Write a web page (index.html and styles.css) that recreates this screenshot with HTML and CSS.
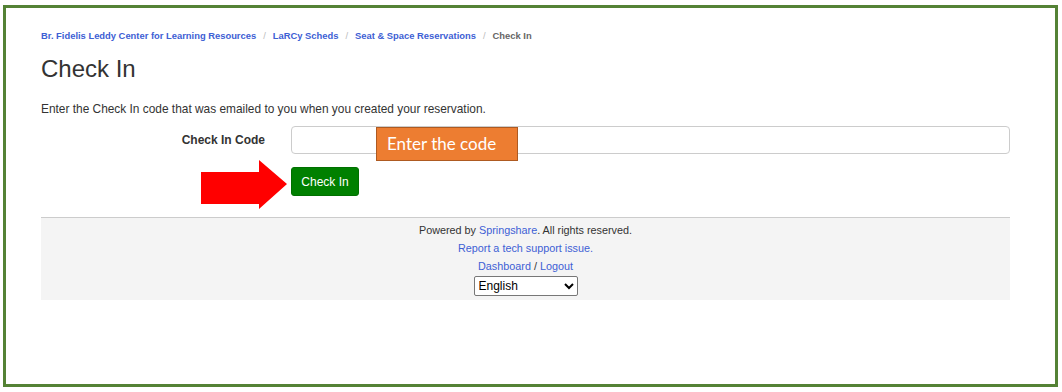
FILE: index.html
```html
<!DOCTYPE html>
<html lang="en">
<head>
  <meta charset="UTF-8" />
  <title>Check In - LaRCy Scheds</title>
  <link rel="stylesheet" href="styles.css">
</head>
<body>
  <div class="frame">
    <div class="container">
      <ol class="breadcrumb">
        <li><a href="#">Br. Fidelis Leddy Center for Learning Resources</a></li>
        <li><a href="#">LaRCy Scheds</a></li>
        <li><a href="#">Seat &amp; Space Reservations</a></li>
        <li class="active">Check In</li>
      </ol>
      <h1 class="page-title">Check In</h1>
      <p class="intro">Enter the Check In code that was emailed to you when you created your reservation.</p>

      <form class="checkin-form">
        <div class="form-row">
          <label class="form-label" for="code">Check In Code</label>
          <div class="form-field">
            <input type="text" id="code" class="form-input">
            <!-- callout from the instructions -->
            <div class="callout">Enter the code</div>
          </div>
        </div>
        <div class="form-row">
          <div class="form-label"></div>
          <div class="form-field">
            <svg class="arrow" width="87" height="50" viewBox="0 0 87 50">
              <polygon points="0,12 58,12 58,0 86,24 58,49 58,44 0,44" fill="#ff0000"/>
            </svg>
            <button type="button" class="btn-checkin">Check In</button>
          </div>
        </div>
      </form>

      <footer class="footer">
        <div>Powered by <a href="#">Springshare</a>. All rights reserved.</div>
        <div><a href="#">Report a tech support issue.</a></div>
        <div><a href="#">Dashboard</a> / <a href="#">Logout</a></div>
        <select class="lang-select">
          <option>English</option>
        </select>
      </footer>
    </div>
  </div>
</body>
</html>
```

FILE: styles.css
```css
body {
  margin: 0;
  padding: 0;
  background: #fff;
  font-family: 'Liberation Sans', Arial, sans-serif;
  color: #333;
}
a {
  color: #3d60d4;
  text-decoration: none;
}
/* --- 外枠 --- */
.frame {
  box-sizing: border-box;
  width: 1055px;
  height: 382px;
  margin: 5px 0 0 3px;
  border: 3px solid #548235;
}
.container {
  width: 969px;
  margin-left: 35px;
  padding-top: 21px;
}
/* --- パンくず --- */
.breadcrumb {
  list-style: none;
  margin: 0;
  padding: 0;
  display: flex;
  font-size: 9.4px;
  font-weight: bold;
  line-height: 14px;
}
.breadcrumb li + li::before {
  content: '/';
  color: #bbb;
  font-weight: normal;
  padding: 0 7px 0 7px;
}
.breadcrumb .active {
  color: #666;
}
.page-title {
  font-size: 24px;
  font-weight: normal;
  margin: 11px 0 0 0;
  line-height: 30px;
}
.intro {
  font-size: 11.9px;
  margin: 17px 0 0 0;
  line-height: 17px;
}
/* --- フォーム --- */
.checkin-form {
  margin-top: 8px;
}
.form-row {
  display: flex;
  align-items: center;
  margin-bottom: 13px;
}
.form-label {
  width: 224px;
  text-align: right;
  font-size: 12px;
  font-weight: bold;
  padding-right: 26px;
  flex-shrink: 0;
}
.form-field {
  flex: 1;
  position: relative;
}
.form-input {
  box-sizing: border-box;
  width: 100%;
  height: 28px;
  border: 1px solid #ccc;
  border-radius: 4px;
  display: block;
}
.callout {
  position: absolute;
  left: 85px;
  top: 1px;
  width: 142px;
  height: 34px;
  box-sizing: border-box;
  background: #ed7d31;
  border: 1px solid #ae5a21;
  color: #fff;
  font-family: Lato, 'Open Sans', sans-serif;
  font-size: 17px;
  line-height: 32px;
  padding-left: 10px;
}
.btn-checkin {
  display: block;
  width: 68px;
  height: 29px;
  background: #008000;
  border: 1px solid #007000;
  border-radius: 3px;
  color: #fff;
  font-family: 'Liberation Sans', Arial, sans-serif;
  font-size: 12px;
  padding: 0;
}
.arrow {
  position: absolute;
  left: -90px;
  top: -7px;
}
/* --- フッター --- */
.footer {
  margin-top: 21px;
  border-top: 1px solid #ccc;
  background: #f4f4f4;
  text-align: center;
  font-size: 10.8px;
  line-height: 18px;
  padding: 3px 0 0 0;
  height: 79px;
}
.lang-select {
  width: 104px;
  height: 20px;
  margin-top: 1px;
  font-family: 'Liberation Sans', Arial, sans-serif;
  font-size: 12px;
  border: 1px solid #777;
  border-radius: 2px;
  background: #fff;
}
```
